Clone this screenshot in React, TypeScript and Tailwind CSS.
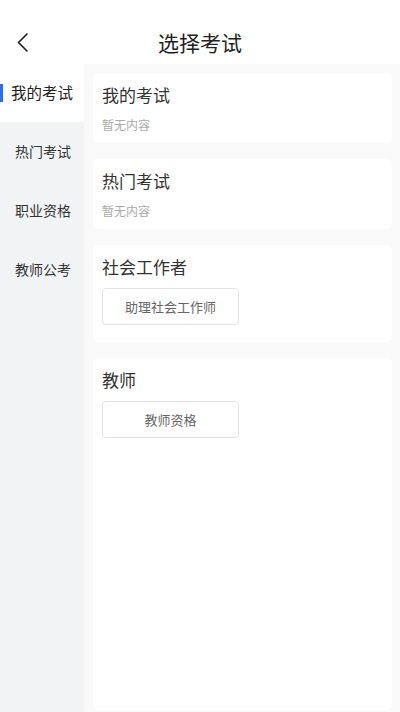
const font = { fontFamily: '"Noto Sans CJK SC", "Noto Sans", sans-serif' }

const menu = ['我的考试', '热门考试', '职业资格', '教师公考']

interface Section {
  title: string
  empty?: boolean
  items?: string[]
}

const sections: Section[] = [
  { title: '我的考试', empty: true },
  { title: '热门考试', empty: true },
  { title: '社会工作者', items: ['助理社会工作师'] },
  { title: '教师', items: ['教师资格'] },
]

export default function App() {
  return (
    <div className="w-[400px] h-[712px] bg-white flex flex-col overflow-hidden" style={font}>
      {/* header */}
      <div className="h-[64px] shrink-0 relative flex items-center justify-center">
        <svg className="absolute left-[14px] top-[30px]" width="18" height="24" viewBox="0 0 18 24" fill="none">
          <polyline points="13,4 4.5,12.5 13,21" stroke="#222" strokeWidth="1.7" strokeLinecap="round" strokeLinejoin="round" />
        </svg>
        <span className="text-[21px] text-[#222] leading-none mt-[21px]">选择考试</span>
      </div>

      <div className="flex flex-1 min-h-0">
        {/* sidebar */}
        <div className="w-[84px] shrink-0 bg-[#f2f3f5] flex flex-col">
          {menu.map((m, i) =>
            i === 0 ? (
              <div key={m} className="h-[58px] bg-white relative flex items-center pl-[11px]">
                <span className="absolute left-0 top-[20px] w-[3px] h-[18px] bg-[#2f6bff]" />
                <span className="text-[15.5px] text-[#222]">{m}</span>
              </div>
            ) : (
              <div key={m} className="h-[59px] flex items-center pl-[15px]">
                <span className="text-[14px] text-[#333]">{m}</span>
              </div>
            )
          )}
        </div>

        {/* content */}
        <div className="flex-1 bg-[#f9f9f9] pt-[9px] pl-[9px] pr-[8px] pb-[2px] flex flex-col gap-[16px]">
          {sections.map((s, i) => (
            <div
              key={s.title}
              className={`bg-white rounded-[5px] px-[9px] pt-[10px] ${
                s.empty ? 'pb-[10px]' : 'pb-[17px]'
              } ${i === sections.length - 1 ? 'flex-1' : ''}`}
            >
              <div className="text-[17px] leading-[24px] text-[#333]">{s.title}</div>
              {s.empty && (
                <div className="mt-[9px] text-[12px] leading-[17px] text-[#aaa]">暂无内容</div>
              )}
              {s.items && (
                <div className="mt-[9px] flex gap-2">
                  {s.items.map((it) => (
                    <div
                      key={it}
                      className="w-[137px] h-[37px] border border-[#e3e3e3] rounded-[4px] flex items-center justify-center text-[13px] text-[#666]"
                    >
                      {it}
                    </div>
                  ))}
                </div>
              )}
            </div>
          ))}
        </div>
      </div>
    </div>
  )
}
